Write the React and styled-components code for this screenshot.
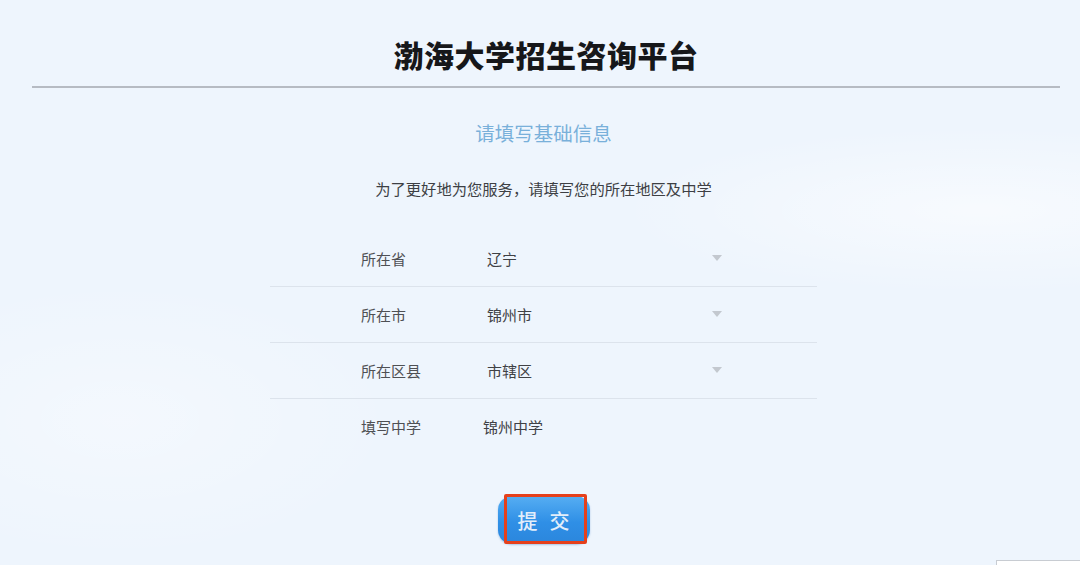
import React from "react";
import styled, { createGlobalStyle } from "styled-components";

const Global = createGlobalStyle`
  html, body { margin: 0; padding: 0; }
  body {
    background: #eef5fd;
    font-family: "Noto Sans CJK SC", "Noto Sans", sans-serif;
    overflow: hidden;
  }
`;

const Page = styled.div`
  position: relative;
  width: 1080px;
  height: 565px;
  box-sizing: border-box;
  padding-left: 7px;
  overflow: hidden;
  background:
    radial-gradient(ellipse 520px 120px at 980px 210px, rgba(255,255,255,0.55), rgba(255,255,255,0) 70%),
    radial-gradient(ellipse 400px 200px at 120px 420px, rgba(255,255,255,0.35), rgba(255,255,255,0) 70%),
    #eef5fd;
  display: flex;
  flex-direction: column;
  align-items: center;
`;

const Header = styled.header`
  align-self: stretch;
  padding: 34px 20px 0 25px;
  display: flex;
  flex-direction: column;
  align-items: center;
`;

const Title = styled.h1`
  margin: 0;
  height: 40px;
  line-height: 40px;
  font-size: 30px;
  font-weight: 900;
  letter-spacing: 0.5px;
  color: #16171a;
`;

const Divider = styled.div`
  align-self: stretch;
  margin-top: 12px;
  height: 2px;
  background: #b6bbc3;
`;

const SectionTitle = styled.h2`
  margin: 32px 0 0 0;
  font-size: 19.5px;
  line-height: 26px;
  font-weight: 400;
  color: #79b0da;
`;

const Intro = styled.p`
  margin: 31px 0 0 0;
  font-size: 15.3px;
  line-height: 22px;
  color: #3d3f44;
`;

const Form = styled.div`
  margin-top: 32px;
  width: 547px;
  display: flex;
  flex-direction: column;
`;

const Row = styled.div`
  height: 55px;
  display: grid;
  grid-template-columns: 126px 1fr 10px;
  align-items: center;
  padding: 0 95px 0 91px;
  border-bottom: ${(p) => (p.$last ? "none" : "1px solid #dce3ec")};
  font-size: 15px;
  color: #4a4c50;
`;

const Label = styled.span`
  color: #4e5054;
`;

const Value = styled.span`
  color: #3f4145;
  margin-left: ${(p) => p.$shift || 0}px;
`;

const Caret = styled.span`
  width: 0;
  height: 0;
  border-left: 5px solid transparent;
  border-right: 5px solid transparent;
  border-top: 6px solid #c3c8cf;
  margin-top: -2px;
`;

const ButtonWrap = styled.div`
  position: relative;
  margin-top: 42px;
`;

const Submit = styled.button`
  width: 92px;
  height: 48px;
  border: none;
  border-radius: 14px;
  background: linear-gradient(180deg, #56aef3 0%, #2f8fe6 55%, #2b86dc 100%);
  box-shadow: 0 1px 2px rgba(40, 110, 190, 0.35);
  color: #e2eefa;
  font-family: "Noto Sans CJK SC", sans-serif;
  font-size: 20px;
  font-weight: 500;
  letter-spacing: 12px;
  padding: 0 0 0 12px;
  cursor: pointer;
`;

const Highlight = styled.span`
  position: absolute;
  left: 6px;
  top: -2px;
  width: 83px;
  height: 50px;
  box-sizing: border-box;
  border: 3px solid #e5401c;
  border-radius: 2px;
  pointer-events: none;
`;

const CornerTab = styled.div`
  position: absolute;
  right: 0;
  bottom: 0;
  width: 83px;
  height: 4px;
  background: #ffffff;
  border-top: 1px solid #c8ccd2;
  border-left: 1px solid #c8ccd2;
`;

const fields = [
  { label: "所在省", value: "辽宁", select: true },
  { label: "所在市", value: "锦州市", select: true },
  { label: "所在区县", value: "市辖区", select: true },
  { label: "填写中学", value: "锦州中学", select: false, shift: -4 },
];

export default function App() {
  return (
    <>
      <Global />
      <Page>
        <Header>
          <Title>渤海大学招生咨询平台</Title>
          <Divider />
        </Header>
        <SectionTitle>请填写基础信息</SectionTitle>
        <Intro>为了更好地为您服务，请填写您的所在地区及中学</Intro>
        <Form>
          {fields.map((f, i) => (
            <Row key={f.label} $last={i === fields.length - 1}>
              <Label>{f.label}</Label>
              <Value $shift={f.shift}>{f.value}</Value>
              {f.select ? <Caret /> : <span />}
            </Row>
          ))}
        </Form>
        <ButtonWrap>
          <Submit>提交</Submit>
          <Highlight />
        </ButtonWrap>
        <CornerTab />
      </Page>
    </>
  );
}
